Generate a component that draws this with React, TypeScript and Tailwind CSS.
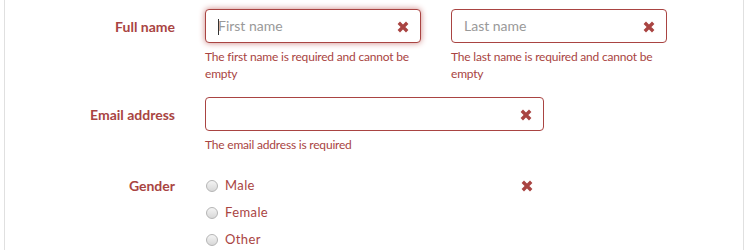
import React from "react";

const red = "#a94442";

function XIcon({ className = "" }: { className?: string }) {
  return (
    <svg width="12" height="12" viewBox="0 0 12 12" className={className}>
      <path d="M1.8 1.8 L10.2 10.2 M10.2 1.8 L1.8 10.2" stroke={red} strokeWidth="3.4" strokeLinecap="butt" />
    </svg>
  );
}

function Input({ placeholder, focused, w }: { placeholder?: string; focused?: boolean; w: string }) {
  return (
    <div
      className={`relative h-[34px] ${w} rounded-[4px] border border-[#a94442] bg-white flex items-center pl-[12px] ${
        focused ? "shadow-[0_0_6px_#ce8483]" : ""
      }`}
    >
      {focused && <div className="absolute left-[12px] top-[9px] h-[16px] w-px bg-[#333]" />}
      <span className="text-[14px] text-[#999] leading-none">{placeholder}</span>
      <XIcon className="absolute right-[11px] top-[10.5px]" />
    </div>
  );
}

function Help({ children }: { children: React.ReactNode }) {
  return <div className="mt-[5px] text-[12px] leading-[17px] text-[#a94442] tracking-[-0.2px]">{children}</div>;
}

function Radio({ label }: { label: string }) {
  return (
    <div className="flex items-center h-[27px]">
      <span className="w-[12px] h-[12px] rounded-full border border-[#b5b5b5] bg-gradient-to-b from-[#f4f4f4] to-[#d8d8d8] ml-[1px]" />
      <span className="ml-[7px] text-[13px] text-[#a94442] tracking-[0.4px]">{label}</span>
    </div>
  );
}

export default function App() {
  return (
    <div className="h-[250px] w-[750px] bg-white overflow-hidden" style={{ fontFamily: "Lato, 'Noto Sans', sans-serif" }}>
      <div className="ml-[4px] w-[740px] h-full border-l border-r border-[#e0e0e0] pt-[9px]">
        {/* Full name */}
        <div className="flex">
          <div className="w-[170px] h-[34px] flex items-center justify-end text-[14px] font-bold text-[#a94442]">Full name</div>
          <div className="ml-[30px] flex gap-[30px]">
            <div className="w-[216px]">
              <Input placeholder="First name" focused w="w-[216px]" />
              <Help>The first name is required and cannot be empty</Help>
            </div>
            <div className="w-[216px]">
              <Input placeholder="Last name" w="w-[216px]" />
              <Help>The last name is required and cannot be empty</Help>
            </div>
          </div>
        </div>
        {/* Email */}
        <div className="flex mt-[15px]">
          <div className="w-[170px] h-[34px] flex items-center justify-end text-[14px] font-bold text-[#a94442]">Email address</div>
          <div className="ml-[30px] w-[339px]">
            <Input w="w-[339px]" />
            <Help>The email address is required</Help>
          </div>
        </div>
        {/* Gender */}
        <div className="flex mt-[19px]">
          <div className="w-[170px] h-[27px] flex items-center justify-end text-[14px] font-bold text-[#a94442]">Gender</div>
          <div className="ml-[30px] w-[339px] relative">
            <Radio label="Male" />
            <Radio label="Female" />
            <Radio label="Other" />
            <XIcon className="absolute right-[11px] top-[7.5px]" />
          </div>
        </div>
      </div>
    </div>
  );
}
